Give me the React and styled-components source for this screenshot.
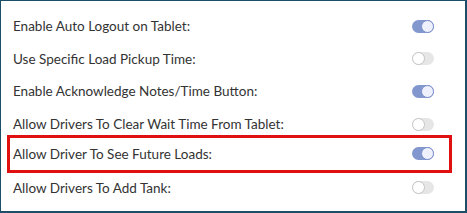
import styled, { createGlobalStyle } from "styled-components";

const GlobalStyle = createGlobalStyle`
  html, body {
    margin: 0;
    padding: 0;
    background: #ffffff;
  }
  body {
    font-family: Lato, "Liberation Sans", sans-serif;
  }
`;

const settings = [
  { label: "Enable Auto Logout on Tablet:", on: true },
  { label: "Use Specific Load Pickup Time:", on: false },
  { label: "Enable Acknowledge Notes/Time Button:", on: true },
  { label: "Allow Drivers To Clear Wait Time From Tablet:", on: false },
  { label: "Allow Driver To See Future Loads:", on: true, marked: true },
  { label: "Allow Drivers To Add Tank:", on: false },
];

const App = () => {
  return (
    <>
      <GlobalStyle />
      <Panel>
        {settings.map((s) => (
          <Row key={s.label} $marked={s.marked}>
            <Label>{s.label}</Label>
            <Switch $on={s.on}>
              <Knob $on={s.on} />
            </Switch>
          </Row>
        ))}
      </Panel>
    </>
  );
};

export default App;

const Panel = styled.div`
  box-sizing: border-box;
  width: 467px;
  height: 213px;
  border-style: solid;
  border-color: #1d4e68;
  border-width: 1px 2px 2px 1px;
  padding: 9px 6px 0 6px;
  display: flex;
  flex-direction: column;
`;

const Row = styled.div`
  box-sizing: border-box;
  height: 32.6px;
  flex-shrink: 0;
  display: flex;
  align-items: center;
  justify-content: space-between;
  padding: 0 15px 0 3px;
  border: 3px solid ${(p) => (p.$marked ? "#e01010" : "transparent")};
  margin: 0 7px 0 0;
  ${(p) => p.$marked && "height: 38px; margin-top: -5.5px; margin-bottom: -1.3px;"}
`;

const Label = styled.span`
  color: #333333;
  font-size: 13.5px;
`;

const Switch = styled.div`
  position: relative;
  width: 22px;
  height: 13px;
  border-radius: 7px;
  background: ${(p) => (p.$on ? "#8397cf" : "#e6e6e6")};
  flex-shrink: 0;
`;

const Knob = styled.div`
  position: absolute;
  top: 0;
  left: ${(p) => (p.$on ? "9px" : "0")};
  box-sizing: border-box;
  width: 13px;
  height: 13px;
  border-radius: 50%;
  background: ${(p) => (p.$on ? "#eef0fb" : "#ffffff")};
  border: 1px solid ${(p) => (p.$on ? "#7a8fcb" : "#c4c4c4")};
`;
